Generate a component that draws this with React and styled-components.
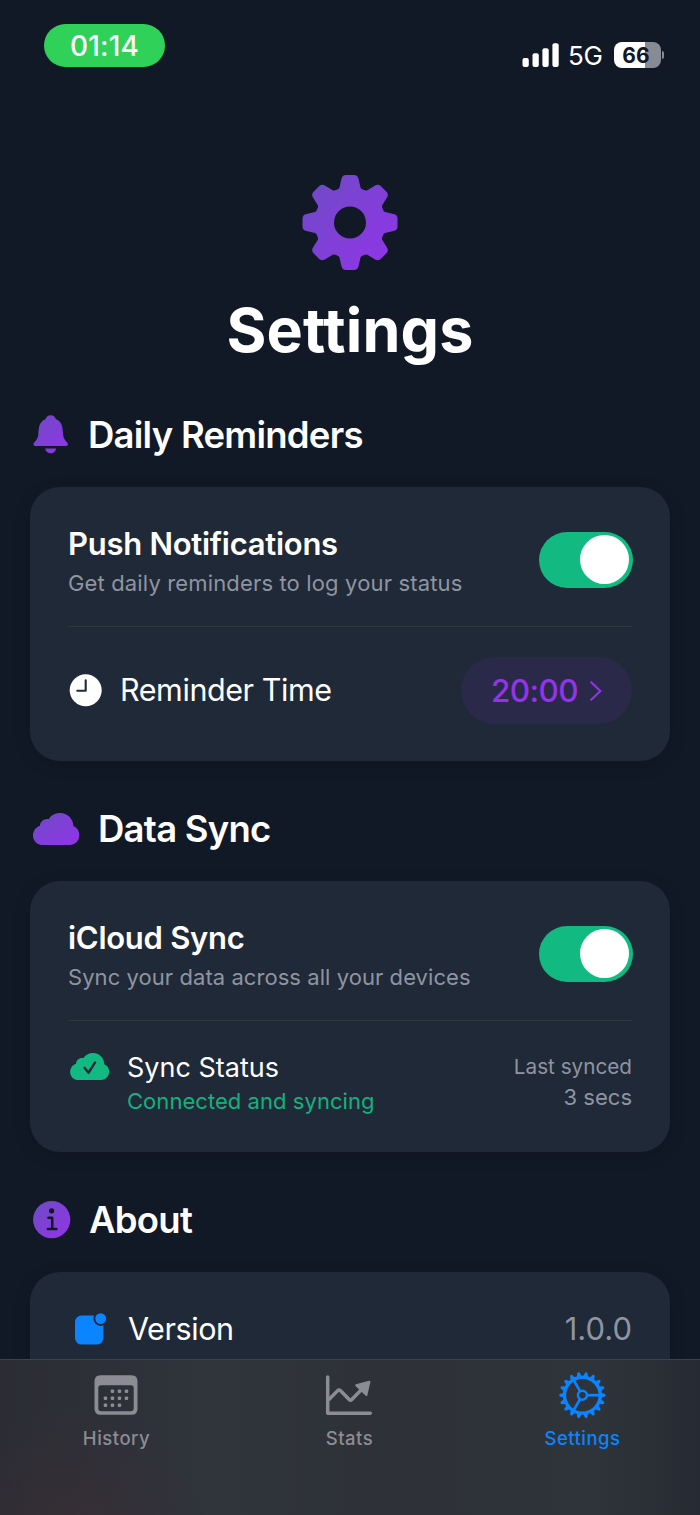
import { useState } from 'react';
import styled, { createGlobalStyle } from 'styled-components';

/* ---------------------------------- style --------------------------------- */
const GlobalStyle = createGlobalStyle`
  * {
    box-sizing: border-box;
  }
  body {
    margin: 0;
    background-color: #111826;
  }
  p, h1, h2 {
    margin: 0;
  }
  button {
    padding: 0;
    border: none;
    font-family: inherit;
  }
  svg {
    display: block;
    flex-shrink: 0;
  }
`;
const Screen = styled.div`
  display: flex;
  flex-direction: column;
  width: 700px;
  height: 1515px;
  overflow: hidden;
  color: #fff;
  background-color: #111826;
  font-family: Inter, 'Liberation Sans', sans-serif;
`;
const StatusBar = styled.header`
  display: flex;
  justify-content: space-between;
  align-items: flex-start;
  height: 100px;
  flex-shrink: 0;
  padding: 24px 36px 0 44px;
`;
const TimePill = styled.div`
  width: 121px;
  height: 43px;
  border-radius: 21.5px;
  background-color: #30d158;
  font-size: 28px;
  font-weight: 500;
  line-height: 44px;
  letter-spacing: 0.2px;
  text-align: center;
`;
const StatusRight = styled.div`
  display: flex;
  align-items: center;
  height: 26px;
  margin-top: 18px;
`;
const Network = styled.span`
  width: 53px;
  padding: 2px 0 0 8px;
  font-size: 26px;
  line-height: 28px;
  letter-spacing: -0.4px;
`;
const Battery = styled.div`
  width: 47px;
  height: 26px;
  margin-left: 1px;
  border-radius: 8px;
  background: linear-gradient(to right, #fff 66%, #888b93 66%);
  color: #111826;
  font-size: 21px;
  font-weight: 700;
  line-height: 27px;
  text-align: center;
  text-indent: -3px;
`;
const BatteryTip = styled.div`
  width: 2px;
  height: 8px;
  margin-left: 1px;
  border-radius: 0 4px 4px 0;
  background-color: #888b93;
`;
const Content = styled.main`
  flex: 1;
  min-height: 0;
  overflow: hidden;
  padding: 75px 30px 0;
`;
const Hero = styled.div`
  display: flex;
  flex-direction: column;
  align-items: center;
`;
const Title = styled.h1`
  margin: 20px 0 1px;
  font-size: 61px;
  font-weight: 700;
  line-height: 78px;
  letter-spacing: 0.1px;
`;
const SectionHeader = styled.div`
  display: flex;
  align-items: center;
  height: 48px;
  margin-top: ${(props) => props.$top}px;
  padding-left: 3px;
  gap: ${(props) => props.$gap}px;
`;
const SectionTitle = styled.h2`
  padding-bottom: 1px;
  font-size: 36.5px;
  font-weight: 600;
  line-height: 46px;
  letter-spacing: -0.75px;
`;
const Card = styled.section`
  height: ${(props) => props.$height}px;
  margin-top: 28px;
  padding: 38px 38px 0;
  border-radius: 30px;
  background-color: #202937;
  box-shadow: 0 4px 20px rgba(0, 0, 0, 0.08);
`;
const Row = styled.div`
  display: flex;
  align-items: center;
  height: ${(props) => props.$height}px;
`;
const RowText = styled.div`
  flex: 1;
`;
const RowTitle = styled.p`
  padding-top: 1px;
  font-size: 31px;
  font-weight: 600;
  line-height: 37px;
  letter-spacing: -0.27px;
`;
const RowSubtitle = styled.p`
  margin-top: 7px;
  margin-bottom: -2px;
  color: #8e95a1;
  font-size: 22px;
  line-height: 28px;
  letter-spacing: ${(props) => props.$spacing || 0}px;
`;
const RowLabel = styled.p`
  flex: 1;
  margin-left: ${(props) => props.$left}px;
  font-size: 30.5px;
  line-height: 38px;
  letter-spacing: -0.42px;
`;
const Divider = styled.div`
  height: 1px;
  margin: 32px 0 29px;
  background-color: #2e3640;
`;
const Switch = styled.button`
  display: flex;
  align-items: center;
  justify-content: ${(props) => (props.$on ? 'flex-end' : 'flex-start')};
  width: 94px;
  height: 56px;
  margin-right: -1px;
  padding: 0 4px;
  border-radius: 28px;
  background-color: ${(props) => (props.$on ? '#12b981' : '#4b5563')};
`;
const Knob = styled.span`
  width: 49px;
  height: 49px;
  border-radius: 50%;
  background-color: #fff;
`;
const TimeButton = styled.button`
  display: flex;
  align-items: center;
  width: 171px;
  height: 67px;
  padding: 1px 0 0 30px;
  gap: 12px;
  border-radius: 33.5px;
  background-color: #2b2949;
  color: #9333ea;
  font-size: 31.5px;
  font-weight: 500;
  letter-spacing: -0.6px;
`;
const StatusTitle = styled.p`
  margin-top: 2px;
  font-size: 27px;
  line-height: 34px;
`;
const StatusDetail = styled.p`
  color: #12b27f;
  font-size: 22px;
  line-height: 32px;
  letter-spacing: 0.05px;
`;
const SyncedInfo = styled.div`
  padding-bottom: 2px;
`;
const LastSynced = styled.p`
  color: #8e95a1;
  font-size: ${(props) => props.$size}px;
  line-height: 30px;
  text-align: right;
`;
const VersionNumber = styled.p`
  color: #8e95a1;
  font-size: 31px;
  line-height: 38px;
`;
const TabBar = styled.nav`
  display: flex;
  height: 156px;
  flex-shrink: 0;
  border-top: 1px solid #3b434c;
  background: radial-gradient(
      circle at 75px 175px,
      rgba(66, 46, 52, 0.5),
      rgba(60, 46, 52, 0) 130px
    ),
    linear-gradient(
      to right,
      #2b2c34,
      #2e3139 18%,
      #30343b 30%,
      #2e3138 55%,
      #2f333a 85%,
      #262a32
    );
`;
const Tab = styled.a`
  display: flex;
  flex-direction: column;
  align-items: center;
  width: 233px;
  padding-top: 11px;
  color: ${(props) => (props.$active ? '#0a84ff' : '#8b8d93')};

  & > svg {
    margin-right: 2px;
  }
`;
const TabLabel = styled.span`
  margin-top: 7px;
  font-size: 18.5px;
  font-weight: 500;
  line-height: 24px;
  letter-spacing: 0.5px;
`;

/* ---------------------------------- icons --------------------------------- */
const CLOUD =
  'M10 32C4 32 0 27.6 0 22.4C0 17.7 3 14 7 12.7C7.2 8.6 11 5.3 15.7 6.2C18 2.3 22 0 27 0C34.5 0 40.2 5.6 40.5 13.2C44 14.5 46.3 17.9 46.3 22C46.3 27.7 42.2 32 36.4 32Z';

function PurpleGradient({ id }) {
  return (
    <linearGradient id={id} x1="0" y1="0" x2="1" y2="1">
      <stop offset="0" stopColor="#6d4cc3" />
      <stop offset="1" stopColor="#9333ea" />
    </linearGradient>
  );
}

function SignalIcon() {
  return (
    <svg width="38" height="26" viewBox="0 0 38 26" fill="#fff">
      <rect x="0.5" y="16" width="6.3" height="9" rx="2" />
      <rect x="10.5" y="11.3" width="6.3" height="13.7" rx="2" />
      <rect x="20.4" y="6.3" width="6.3" height="18.7" rx="2" />
      <rect x="30.4" y="1.3" width="6.3" height="23.7" rx="2" />
    </svg>
  );
}

function GearIcon() {
  const angles = [0, 45, 90, 135, 180, 225, 270, 315];
  return (
    <svg width="96" height="96" viewBox="-48 -47.5 96 96">
      <defs>
        <PurpleGradient id="gearFill" />
        <mask id="gearMask" maskUnits="userSpaceOnUse" x="-48" y="-48" width="96" height="96">
          <circle r="35.2" fill="#fff" />
          {angles.map((a) => (
            <path
              key={a}
              transform={`rotate(${a})`}
              fill="#fff"
              d="M-16 -31L-11.8 -33.5Q-10.8 -34 -10.5 -35L-8.6 -43.5Q-7.7 -47.5 -4 -47.5H4Q7.7 -47.5 8.6 -43.5L10.5 -35Q10.8 -34 11.8 -33.5L16 -31Z"
            />
          ))}
          <circle r="16" fill="#000" />
        </mask>
      </defs>
      <rect x="-48" y="-48" width="96" height="96" fill="url(#gearFill)" mask="url(#gearMask)" />
    </svg>
  );
}

function BellIcon() {
  return (
    <svg width="36" height="40" viewBox="0 0 36 40">
      <defs>
        <PurpleGradient id="bellFill" />
      </defs>
      <path
        fill="url(#bellFill)"
        d="M2.4 31C.9 31 .5 30.2 .5 29.3C.5 26.8 4.6 25.6 5.2 20.2C5.7 13.5 5.8 6.5 12.6 4C13.3 1.8 15.2 .3 17.7 .3C20.2 .3 22.1 1.8 22.8 4C29.6 6.5 29.7 13.5 30.2 20.2C30.8 25.6 34.9 26.800 34.9 29.3C34.9 30.2 34.5 31 33 31ZM12.2 33.5H23.2C22.7 36.5 20.5 38.3 17.7 38.3C14.9 38.3 12.7 36.5 12.2 33.5Z"
      />
    </svg>
  );
}

function ClockIcon() {
  return (
    <svg width="36" height="36" viewBox="0 0 36 36">
      <circle cx="17.7" cy="18.2" r="16" fill="#fff" />
      <path
        d="M17.7 8.3V18.8H9.3"
        fill="none"
        stroke="#202937"
        strokeWidth="2.1"
        strokeLinecap="round"
        strokeLinejoin="round"
      />
    </svg>
  );
}

function ChevronIcon() {
  return (
    <svg width="12" height="20" viewBox="0 0 12 20">
      <path
        d="M1.2 1.2L10.4 10L1.2 18.8"
        fill="none"
        stroke="currentColor"
        strokeWidth="2"
        strokeLinecap="round"
        strokeLinejoin="round"
      />
    </svg>
  );
}

function CloudIcon() {
  return (
    <svg width="47" height="32" viewBox="0 0 47 32">
      <defs>
        <PurpleGradient id="cloudFill" />
      </defs>
      <path fill="url(#cloudFill)" d={CLOUD} />
    </svg>
  );
}

function CloudCheckIcon() {
  return (
    <svg width="39.5" height="27" viewBox="0 0 46.5 32">
      <path fill="#12b981" d={CLOUD} />
      <path
        d="M17 17.6L21.8 23.4L29.6 11.2"
        fill="none"
        stroke="#202937"
        strokeWidth="2.8"
        strokeLinecap="round"
        strokeLinejoin="round"
      />
    </svg>
  );
}

function InfoIcon() {
  return (
    <svg width="38" height="38" viewBox="0 0 38 38">
      <defs>
        <PurpleGradient id="infoFill" />
      </defs>
      <circle cx="18.7" cy="18.7" r="18.6" fill="url(#infoFill)" />
      <circle cx="18.6" cy="9.8" r="2.6" fill="#111826" />
      <path
        d="M15.4 16.8H19.2V27.8M14.9 28.1H23.4"
        fill="none"
        stroke="#111826"
        strokeWidth="2.5"
        strokeLinecap="round"
        strokeLinejoin="round"
      />
    </svg>
  );
}

function AppBadgeIcon() {
  return (
    <svg width="32" height="32" viewBox="0 0 32 32">
      <rect x="0" y="2.6" width="28.4" height="29" rx="6.5" fill="#0a84ff" />
      <circle cx="25.7" cy="5.6" r="7.3" fill="#202937" />
      <circle cx="25.7" cy="5.6" r="5.4" fill="#0a84ff" />
    </svg>
  );
}

function CalendarIcon() {
  const dots = [
    [1, 0], [2, 0], [3, 0],
    [0, 1], [1, 1], [2, 1], [3, 1],
    [0, 2], [1, 2], [2, 2],
  ];
  return (
    <svg width="48" height="48" viewBox="0 0 48 48" fill="currentColor">
      <path
        fillRule="evenodd"
        d="M8.5 4.3H39.5Q45.5 4.3 45.5 10.3V37.8Q45.5 43.8 39.5 43.8H8.5Q2.5 43.8 2.5 37.8V10.3Q2.5 4.3 8.5 4.3ZM9 14.3Q6.3 14.3 6.3 17V37.2Q6.3 40.2 9.3 40.2H38.7Q41.7 40.2 41.7 37.2V17Q41.7 14.3 39 14.3Z"
      />
      {dots.map(([x, y]) => (
        <rect
          key={`${x}${y}`}
          x={11.7 + x * 7}
          y={18.4 + y * 7}
          width="3.5"
          height="3.5"
          rx="1.2"
        />
      ))}
    </svg>
  );
}

function ChartIcon() {
  return (
    <svg width="48" height="48" viewBox="0 0 48 48">
      <g
        fill="none"
        stroke="currentColor"
        strokeWidth="3.5"
        strokeLinecap="round"
        strokeLinejoin="round"
      >
        <path d="M2.7 6V42.3H45.3" />
        <path
          d="M3.5 29L12.7 19.6Q14 18.4 15.3 19.6L24.2 28.6Q25.5 29.9 26.8 28.6L39 16"
          strokeLinecap="butt"
        />
      </g>
      <path
        d="M44.4 10.8L31.2 14.2L41.4 24Z"
        fill="currentColor"
        stroke="currentColor"
        strokeWidth="2"
        strokeLinejoin="round"
      />
    </svg>
  );
}

function SettingsTabIcon() {
  const teeth = Array.from({ length: 18 }, (_, i) => i * 20);
  return (
    <svg width="48" height="48" viewBox="-24.4 -24.2 48 48" fill="none" stroke="currentColor">
      <circle r="17.9" strokeWidth="3.4" />
      <circle r="4.5" strokeWidth="2.4" />
      {teeth.map((a) => (
        <path
          key={a}
          transform={`rotate(${a})`}
          d="M18.5 -2.4L22 -1.5Q23.2 -1.2 23.2 0Q23.2 1.2 22 1.5L18.5 2.4Z"
          fill="currentColor"
          stroke="none"
        />
      ))}
      {[0, 120, 240].map((a) => (
        <path key={a} transform={`rotate(${a})`} d="M5 0H17" strokeWidth="2.7" />
      ))}
    </svg>
  );
}

/* -------------------------------- component ------------------------------- */
function Toggle({ label }) {
  const [on, setOn] = useState(true);
  return (
    <Switch
      role="switch"
      aria-checked={on}
      aria-label={label}
      $on={on}
      onClick={() => setOn(!on)}
    >
      <Knob />
    </Switch>
  );
}

function App() {
  return (
    <>
      <GlobalStyle />
      <Screen>
        <StatusBar>
          <TimePill>01:14</TimePill>
          <StatusRight>
            <SignalIcon />
            <Network>5G</Network>
            <Battery>66</Battery>
            <BatteryTip />
          </StatusRight>
        </StatusBar>
        <Content>
          <Hero>
            <GearIcon />
            <Title>Settings</Title>
          </Hero>

          <SectionHeader $top={41} $gap={19}>
            <BellIcon />
            <SectionTitle>Daily Reminders</SectionTitle>
          </SectionHeader>
          <Card $height={274}>
            <Row $height={69}>
              <RowText>
                <RowTitle>Push Notifications</RowTitle>
                <RowSubtitle $spacing={0.15}>
                  Get daily reminders to log your status
                </RowSubtitle>
              </RowText>
              <Toggle label="Push Notifications" />
            </Row>
            <Divider />
            <Row $height={68}>
              <ClockIcon />
              <RowLabel $left={16}>Reminder Time</RowLabel>
              <TimeButton>
                20:00
                <ChevronIcon />
              </TimeButton>
            </Row>
          </Card>

          <SectionHeader $top={44} $gap={18}>
            <CloudIcon />
            <SectionTitle>Data Sync</SectionTitle>
          </SectionHeader>
          <Card $height={271}>
            <Row $height={69}>
              <RowText>
                <RowTitle>iCloud Sync</RowTitle>
                <RowSubtitle $spacing={0.06}>
                  Sync your data across all your devices
                </RowSubtitle>
              </RowText>
              <Toggle label="iCloud Sync" />
            </Row>
            <Divider />
            <Row $height={66}>
              <SyncIconBox>
                <CloudCheckIcon />
              </SyncIconBox>
              <RowText>
                <StatusTitle>Sync Status</StatusTitle>
                <StatusDetail>Connected and syncing</StatusDetail>
              </RowText>
              <SyncedInfo>
                <LastSynced $size={20.7}>Last synced</LastSynced>
                <LastSynced $size={22}>3 secs</LastSynced>
              </SyncedInfo>
            </Row>
          </Card>

          <SectionHeader $top={44} $gap={18}>
            <InfoIcon />
            <SectionTitle>About</SectionTitle>
          </SectionHeader>
          <Card $height={271}>
            <VersionRow $height={38}>
              <AppBadgeIcon />
              <RowLabel $left={21}>Version</RowLabel>
              <VersionNumber>1.0.0</VersionNumber>
            </VersionRow>
          </Card>
        </Content>
        <TabBar>
          <Tab>
            <CalendarIcon />
            <TabLabel>History</TabLabel>
          </Tab>
          <Tab>
            <ChartIcon />
            <TabLabel>Stats</TabLabel>
          </Tab>
          <Tab $active>
            <SettingsTabIcon />
            <TabLabel>Settings</TabLabel>
          </Tab>
        </TabBar>
      </Screen>
    </>
  );
}

const SyncIconBox = styled.div`
  align-self: flex-start;
  width: 59px;
  padding: 3px 0 0 2px;
`;
const VersionRow = styled(Row)`
  padding-left: 7px;
`;

export default App;
